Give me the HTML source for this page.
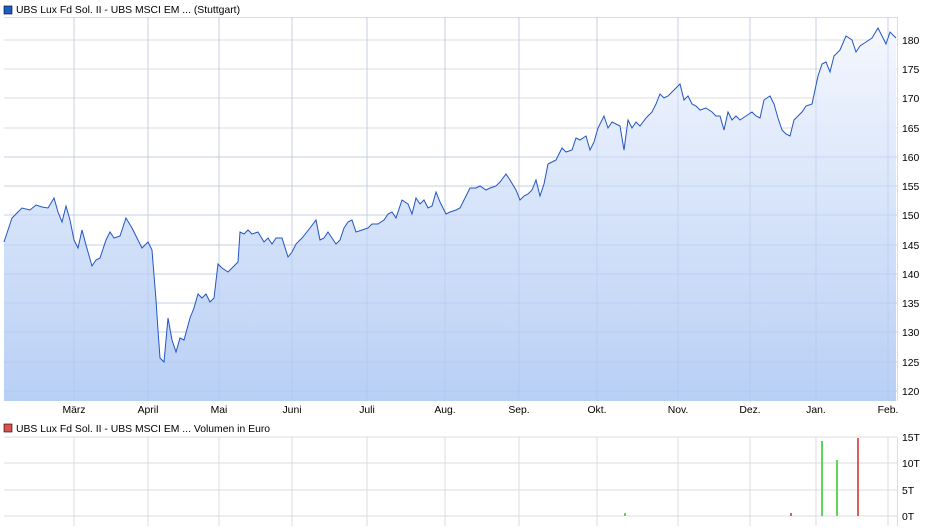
<!DOCTYPE html>
<html><head><meta charset="utf-8"><style>
body{margin:0;background:#fff;font-family:"Liberation Sans",sans-serif;}
svg text{font-family:"Liberation Sans",sans-serif;font-size:10.4px;fill:#000;}
</style></head><body>
<svg width="940" height="526" xmlns="http://www.w3.org/2000/svg">
<defs><linearGradient id="g" x1="0" y1="0" x2="0" y2="1"><stop offset="0" stop-color="#f4f7fe"/><stop offset="1" stop-color="#b8cff5"/></linearGradient></defs>
<rect x="4" y="6" width="8" height="8" fill="#1f5bc6" stroke="#000" stroke-width="0.6"/>
<text x="16" y="13">UBS Lux Fd Sol. II - UBS MSCI EM ... (Stuttgart)</text>
<g stroke="#dcdcdc" stroke-width="1">
<line x1="4" y1="17.5" x2="897" y2="17.5"/>
<line x1="4" y1="40" x2="897" y2="40"/><line x1="4" y1="69" x2="897" y2="69"/><line x1="4" y1="98" x2="897" y2="98"/><line x1="4" y1="128" x2="897" y2="128"/><line x1="4" y1="157" x2="897" y2="157"/><line x1="4" y1="186" x2="897" y2="186"/><line x1="4" y1="215" x2="897" y2="215"/><line x1="4" y1="245" x2="897" y2="245"/><line x1="4" y1="274" x2="897" y2="274"/><line x1="4" y1="303" x2="897" y2="303"/><line x1="4" y1="332" x2="897" y2="332"/><line x1="4" y1="362" x2="897" y2="362"/><line x1="4" y1="391" x2="897" y2="391"/>
<line x1="74" y1="17" x2="74" y2="401"/><line x1="148" y1="17" x2="148" y2="401"/><line x1="219" y1="17" x2="219" y2="401"/><line x1="292" y1="17" x2="292" y2="401"/><line x1="367" y1="17" x2="367" y2="401"/><line x1="445" y1="17" x2="445" y2="401"/><line x1="519" y1="17" x2="519" y2="401"/><line x1="597" y1="17" x2="597" y2="401"/><line x1="678" y1="17" x2="678" y2="401"/><line x1="750" y1="17" x2="750" y2="401"/><line x1="816" y1="17" x2="816" y2="401"/><line x1="888" y1="17" x2="888" y2="401"/>
<line x1="897.5" y1="17" x2="897.5" y2="401"/>
</g>
<path id="p" d="M4 242L8 230L12 218L18 212L22 208L30 210L36 205L42 207L48 208L54 198L58 212L62 222L66 206L70 220L74 240L78 248L82 230L86 245L92 266L96 260L100 258L106 240L110 232L114 238L120 236L126 218L132 228L138 240L142 248L148 242L152 250L154 275L156 300L158 330L160 358L164 362L168 318L172 340L176 352L180 338L184 340L190 318L194 308L198 294L202 298L206 294L210 302L214 298L218 264L222 268L228 272L234 266L238 262L240 232L244 234L248 230L252 234L258 232L264 242L268 238L272 244L276 238L282 238L288 257L292 252L296 244L302 238L310 228L316 220L320 240L324 238L328 232L332 238L336 244L340 240L344 228L348 222L352 220L356 232L362 230L368 228L372 224L378 224L384 220L388 214L392 212L396 218L402 200L408 204L412 214L416 198L420 204L424 200L428 208L432 206L436 192L440 202L446 214L450 212L456 210L460 208L466 196L470 188L476 188L480 186L486 190L490 188L496 186L500 182L506 174L510 180L516 190L520 200L524 196L528 194L532 190L536 180L540 196L544 184L548 164L552 162L556 160L562 148L566 152L572 150L576 138L580 140L586 136L590 150L594 142L598 128L604 116L608 128L612 122L620 126L624 150L628 120L632 128L636 122L640 126L646 118L652 112L656 104L660 94L664 98L668 96L672 92L676 88L680 84L684 100L688 96L692 104L696 106L700 110L706 108L712 112L716 116L720 116L724 130L728 112L732 120L736 116L740 120L746 116L752 112L756 116L760 118L764 100L770 96L774 104L778 118L782 130L786 134L790 136L794 120L798 116L802 112L806 106L812 104L818 76L822 64L826 62L830 72L834 56L840 50L846 36L852 40L856 52L860 46L866 42L872 38L878 28L882 36L886 44L890 32L896 38" fill="none"/>
<path d="M4 242L8 230L12 218L18 212L22 208L30 210L36 205L42 207L48 208L54 198L58 212L62 222L66 206L70 220L74 240L78 248L82 230L86 245L92 266L96 260L100 258L106 240L110 232L114 238L120 236L126 218L132 228L138 240L142 248L148 242L152 250L154 275L156 300L158 330L160 358L164 362L168 318L172 340L176 352L180 338L184 340L190 318L194 308L198 294L202 298L206 294L210 302L214 298L218 264L222 268L228 272L234 266L238 262L240 232L244 234L248 230L252 234L258 232L264 242L268 238L272 244L276 238L282 238L288 257L292 252L296 244L302 238L310 228L316 220L320 240L324 238L328 232L332 238L336 244L340 240L344 228L348 222L352 220L356 232L362 230L368 228L372 224L378 224L384 220L388 214L392 212L396 218L402 200L408 204L412 214L416 198L420 204L424 200L428 208L432 206L436 192L440 202L446 214L450 212L456 210L460 208L466 196L470 188L476 188L480 186L486 190L490 188L496 186L500 182L506 174L510 180L516 190L520 200L524 196L528 194L532 190L536 180L540 196L544 184L548 164L552 162L556 160L562 148L566 152L572 150L576 138L580 140L586 136L590 150L594 142L598 128L604 116L608 128L612 122L620 126L624 150L628 120L632 128L636 122L640 126L646 118L652 112L656 104L660 94L664 98L668 96L672 92L676 88L680 84L684 100L688 96L692 104L696 106L700 110L706 108L712 112L716 116L720 116L724 130L728 112L732 120L736 116L740 120L746 116L752 112L756 116L760 118L764 100L770 96L774 104L778 118L782 130L786 134L790 136L794 120L798 116L802 112L806 106L812 104L818 76L822 64L826 62L830 72L834 56L840 50L846 36L852 40L856 52L860 46L866 42L872 38L878 28L882 36L886 44L890 32L896 38L896 401L4 401Z" fill="url(#g)"/>
<g stroke="#a9c1ea" stroke-width="1" opacity="0.45">
<line x1="74" y1="17" x2="74" y2="401"/><line x1="148" y1="17" x2="148" y2="401"/><line x1="219" y1="17" x2="219" y2="401"/><line x1="292" y1="17" x2="292" y2="401"/><line x1="367" y1="17" x2="367" y2="401"/><line x1="445" y1="17" x2="445" y2="401"/><line x1="519" y1="17" x2="519" y2="401"/><line x1="597" y1="17" x2="597" y2="401"/><line x1="678" y1="17" x2="678" y2="401"/><line x1="750" y1="17" x2="750" y2="401"/><line x1="816" y1="17" x2="816" y2="401"/><line x1="888" y1="17" x2="888" y2="401"/>
<line x1="4" y1="157" x2="897" y2="157"/><line x1="4" y1="186" x2="897" y2="186"/><line x1="4" y1="215" x2="897" y2="215"/><line x1="4" y1="245" x2="897" y2="245"/><line x1="4" y1="274" x2="897" y2="274"/><line x1="4" y1="303" x2="897" y2="303"/><line x1="4" y1="332" x2="897" y2="332"/><line x1="4" y1="362" x2="897" y2="362"/><line x1="4" y1="391" x2="897" y2="391"/>
</g>
<use href="#p" stroke="#2255c4" stroke-width="1"/>
<g text-anchor="start">
<text x="902" y="44">180</text><text x="902" y="73">175</text><text x="902" y="102">170</text><text x="902" y="132">165</text><text x="902" y="161">160</text><text x="902" y="190">155</text><text x="902" y="219">150</text><text x="902" y="249">145</text><text x="902" y="278">140</text><text x="902" y="307">135</text><text x="902" y="336">130</text><text x="902" y="366">125</text><text x="902" y="395">120</text>
</g>
<g text-anchor="middle">
<text x="74" y="413">März</text><text x="148" y="413">April</text><text x="219" y="413">Mai</text><text x="292" y="413">Juni</text><text x="367" y="413">Juli</text><text x="445" y="413">Aug.</text><text x="519" y="413">Sep.</text><text x="597" y="413">Okt.</text><text x="678" y="413">Nov.</text><text x="750" y="413">Dez.</text><text x="816" y="413">Jan.</text><text x="888" y="413">Feb.</text>
</g>
<rect x="4" y="424" width="8" height="8" fill="#d9534f" stroke="#000" stroke-width="0.6"/>
<text x="16" y="432">UBS Lux Fd Sol. II - UBS MSCI EM ... Volumen in Euro</text>
<g stroke="#dcdcdc" stroke-width="1">
<line x1="4" y1="437" x2="897" y2="437"/><line x1="4" y1="463" x2="897" y2="463"/><line x1="4" y1="490" x2="897" y2="490"/><line x1="4" y1="516" x2="897" y2="516"/>
<line x1="74" y1="437" x2="74" y2="526"/><line x1="148" y1="437" x2="148" y2="526"/><line x1="219" y1="437" x2="219" y2="526"/><line x1="292" y1="437" x2="292" y2="526"/><line x1="367" y1="437" x2="367" y2="526"/><line x1="445" y1="437" x2="445" y2="526"/><line x1="519" y1="437" x2="519" y2="526"/><line x1="597" y1="437" x2="597" y2="526"/><line x1="678" y1="437" x2="678" y2="526"/><line x1="750" y1="437" x2="750" y2="526"/><line x1="816" y1="437" x2="816" y2="526"/><line x1="888" y1="437" x2="888" y2="526"/><line x1="897.5" y1="437" x2="897.5" y2="526"/>
</g>
<rect x="624" y="513" width="2" height="3" fill="#5cd65c"/>
<rect x="790" y="513" width="2" height="3" fill="#d9605c"/>
<rect x="821" y="441" width="2" height="75" fill="#5cd65c"/>
<rect x="836" y="460" width="2" height="56" fill="#5cd65c"/>
<rect x="857" y="438" width="2" height="78" fill="#d9605c"/>
<text x="902" y="441">15T</text><text x="902" y="467">10T</text><text x="902" y="494">5T</text><text x="902" y="520">0T</text>
</svg>
</body></html>
